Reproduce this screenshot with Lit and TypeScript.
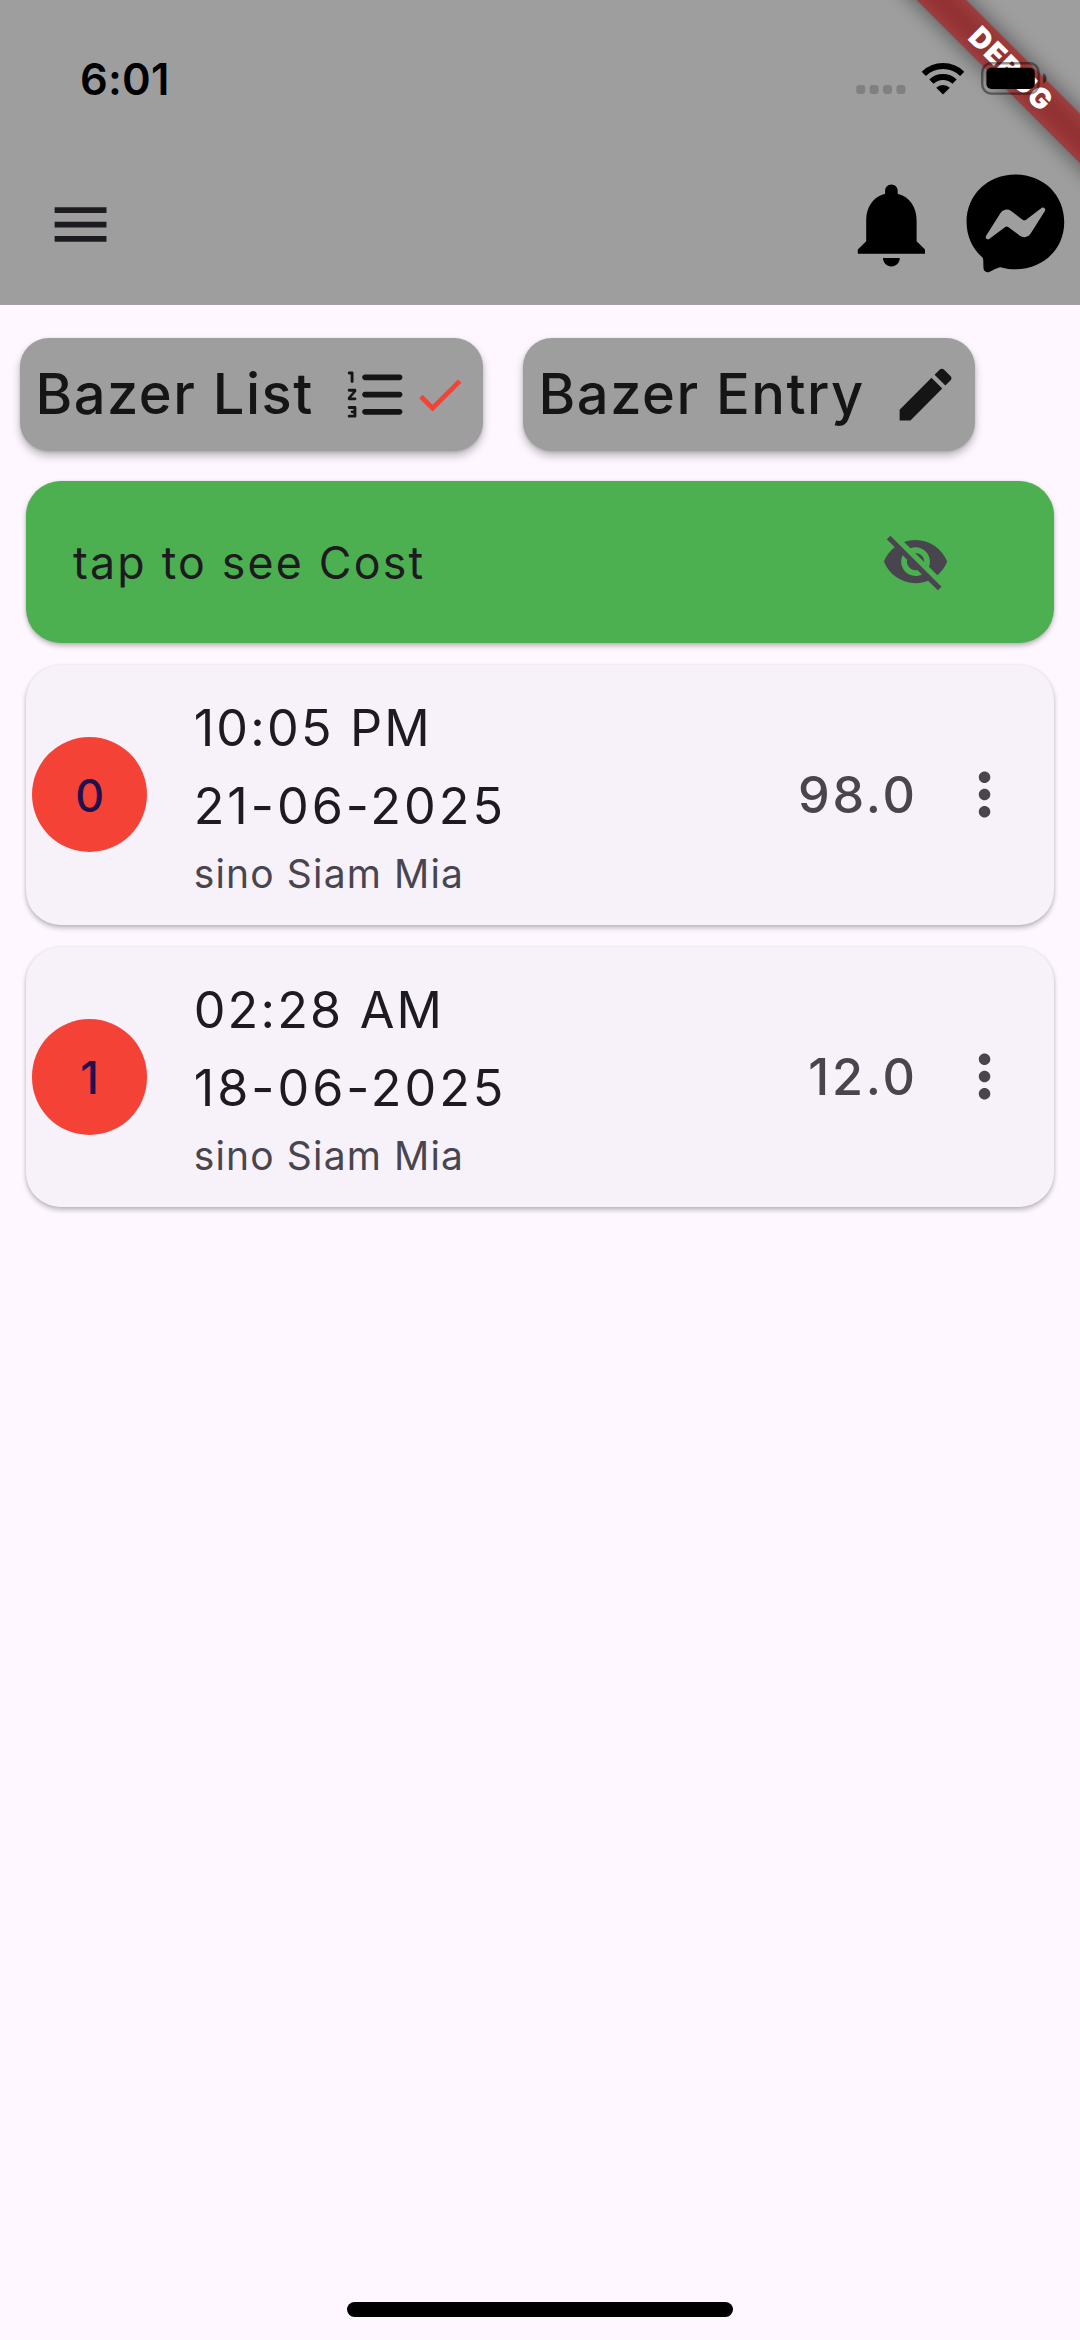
import { LitElement, html, css, svg } from "lit";
import { customElement, property } from "lit/decorators.js";

interface Expense {
  time: string;
  date: string;
  who: string;
  amount: string;
}

const EXPENSES: Expense[] = [
  { time: "10:05 PM", date: "21-06-2025", who: "sino Siam Mia", amount: "98.0" },
  { time: "02:28 AM", date: "18-06-2025", who: "sino Siam Mia", amount: "12.0" },
];

const ICONS = {
  menu: svg`<path d="M3 18h18v-2H3v2zm0-5h18v-2H3v2zm0-7v2h18V6H3z"/>`,
  bell: svg`<path d="M12 22c1.1 0 2-.9 2-2h-4c0 1.1.89 2 2 2zm6-6v-5c0-3.07-1.64-5.64-4.5-6.32V4c0-.83-.67-1.5-1.5-1.5s-1.5.67-1.5 1.5v.68C7.63 5.36 6 7.92 6 11v5l-2 2v1h16v-1l-2-2z"/>`,
  list: svg`<path d="M8 7h12c.55 0 1-.45 1-1s-.45-1-1-1H8c-.55 0-1 .45-1 1s.45 1 1 1zm12 10H8c-.55 0-1 .45-1 1s.45 1 1 1h12c.55 0 1-.45 1-1s-.45-1-1-1zm0-6H8c-.55 0-1 .45-1 1s.45 1 1 1h12c.55 0 1-.45 1-1s-.45-1-1-1zM4.5 16h-2c-.28 0-.5.22-.5.5s.22.5.5.5H4v.5h-.5c-.28 0-.5.22-.5.5s.22.5.5.5H4v.5H2.5c-.28 0-.5.22-.5.5s.22.5.5.5h2c.28 0 .5-.22.5-.5v-3c0-.28-.22-.5-.5-.5zm-2-11H3v2.5c0 .28.22.5.5.5s.5-.22.5-.5v-3c0-.28-.22-.5-.5-.5h-1c-.28 0-.5.22-.5.5s.22.5.5.5zm2 5h-2c-.28 0-.5.22-.5.5s.22.5.5.5h1.3l-1.68 1.96c-.08.09-.12.21-.12.32v.22c0 .28.22.5.5.5h2c.28 0 .5-.22.5-.5s-.22-.5-.5-.5H3.2l1.68-1.96c.08-.09.12-.21.12-.32v-.22c0-.28-.22-.5-.5-.5z"/>`,
  check: svg`<path d="M9 16.17L4.83 12l-1.42 1.41L9 19 21 7l-1.41-1.41z"/>`,
  edit: svg`<path d="M3 17.25V21h3.75L17.81 9.94l-3.75-3.75L3 17.25zM20.71 7.04c.39-.39.39-1.02 0-1.41l-2.34-2.34c-.39-.39-1.02-.39-1.41 0l-1.83 1.83 3.75 3.75 1.83-1.83z"/>`,
  eyeOff: svg`<path d="M12 7c2.76 0 5 2.24 5 5 0 .65-.13 1.26-.36 1.83l2.92 2.92c1.51-1.26 2.7-2.89 3.43-4.75-1.73-4.39-6-7.5-11-7.5-1.4 0-2.74.25-3.98.7l2.16 2.16C10.74 7.13 11.35 7 12 7zM2 4.27l2.28 2.28.46.46C3.08 8.3 1.78 10.02 1 12c1.73 4.39 6 7.5 11 7.5 1.55 0 3.03-.3 4.38-.84l.42.42L19.73 22 21 20.73 3.27 3 2 4.27zM7.53 9.8l1.55 1.55c-.05.21-.08.43-.08.65 0 1.66 1.34 3 3 3 .22 0 .44-.03.65-.08l1.55 1.55c-.67.33-1.41.53-2.2.53-2.76 0-5-2.24-5-5 0-.79.2-1.53.53-2.2zm4.31-.78l3.15 3.15.02-.16c0-1.66-1.34-3-3-3l-.17.01z"/>`,
  more: svg`<path d="M12 8c1.1 0 2-.9 2-2s-.9-2-2-2-2 .9-2 2 .9 2 2 2zm0 2c-1.1 0-2 .9-2 2s.9 2 2 2 2-.9 2-2-.9-2-2-2zm0 6c-1.1 0-2 .9-2 2s.9 2 2 2 2-.9 2-2-.9-2-2-2z"/>`,
};

type IconName = keyof typeof ICONS;

@customElement("md-icon")
class MdIcon extends LitElement {
  static styles = css`
    :host {
      display: block;
      flex: none;
      width: 69.12px;
      height: 69.12px;
    }
    .glyph {
      display: block;
      width: 100%;
      height: 100%;
      fill: currentColor;
    }
  `;
  @property() name: IconName = "menu";
  render() {
    return html`<svg class="glyph" viewBox="0 0 24 24">${ICONS[this.name]}</svg>`;
  }
}

@customElement("status-bar")
class StatusBar extends LitElement {
  static styles = css`
    :host {
      display: flex;
      align-items: center;
      box-sizing: border-box;
      height: 157.4px;
      padding: 0 33px 0 80px;
      color: #000;
    }
    .clock {
      flex: 1;
      font-size: 43.5px;
      line-height: 54px;
      font-weight: 600;
      letter-spacing: 0.2px;
    }
    .dots {
      display: block;
      width: 50px;
      height: 9px;
      margin: 22px 15px 0 0;
      fill: #808080;
    }
    .wifi {
      display: block;
      width: 44px;
      height: 33px;
      margin-right: 16px;
    }
    .battery {
      display: block;
      width: 66px;
      height: 33px;
    }
  `;
  render() {
    return html`
      <div class="clock">6:01</div>
      <svg class="dots" viewBox="0 0 50 9">
        <rect x="0.2" width="9" height="9" rx="3" />
        <rect x="13.6" width="9" height="9" rx="3" />
        <rect x="27" width="9" height="9" rx="3" />
        <rect x="40.4" width="9" height="9" rx="3" />
      </svg>
      <svg class="wifi" viewBox="0 0 44 33" fill="none" stroke="#000">
        <path d="M2.8 11.8a27.6 27.6 0 0 1 38.4 0" stroke-width="6" />
        <path d="M10.4 19.6a16.8 16.8 0 0 1 23.2 0" stroke-width="6" />
        <path d="M22 32.6l-6.8-6.9a9.9 9.9 0 0 1 13.6 0z" fill="#000" stroke="none" />
      </svg>
      <svg class="battery" viewBox="0 0 66 33">
        <rect x="1.2" y="1.2" width="56.4" height="30.4" rx="9" fill="none" stroke="#000" stroke-opacity="0.42" stroke-width="2.4" />
        <rect x="5.4" y="5.8" width="48.4" height="21.2" rx="5" fill="#000" />
        <path d="M62.2 11.3c4.4 2 4.4 8.4 0 10.4z" fill="#000" fill-opacity="0.55" />
      </svg>
    `;
  }
}

@customElement("app-toolbar")
class AppToolbar extends LitElement {
  static styles = css`
    :host {
      display: flex;
      align-items: center;
      box-sizing: border-box;
      height: 161.3px;
      padding: 0 14.4px 0 46.4px;
      color: #000;
    }
    .menu {
      color: #1d1b20;
      margin-right: auto;
    }
    .bell {
      width: 100.8px;
      height: 100.8px;
      margin-right: 23.4px;
    }
    .messenger {
      display: block;
      width: 100.8px;
      height: 100.8px;
      margin-bottom: 3px;
    }
  `;
  render() {
    return html`
      <md-icon class="menu" name="menu"></md-icon>
      <md-icon class="bell" name="bell"></md-icon>
      <svg class="messenger" viewBox="0 0 512 512">
        <path d="M256.55 8C116.52 8 8 110.34 8 248.57c0 72.3 29.71 134.78 78.07 177.94 8.35 7.51 6.63 11.86 8.05 58.23A19.92 19.92 0 0 0 122 502.31c52.91-23.3 53.59-25.14 62.56-22.7C337.85 521.8 504 423.7 504 248.57 504 110.34 396.59 8 256.55 8zm149.24 185.13l-73 115.57a37.37 37.37 0 0 1-53.91 9.93l-58.08-43.47a15 15 0 0 0-18 0l-78.37 59.44c-10.46 7.93-24.16-4.6-17.11-15.67l73-115.57a37.36 37.36 0 0 1 53.91-9.93l58.06 43.46a15 15 0 0 0 18 0l78.41-59.38c10.44-7.98 24.14 4.54 17.09 15.62z" />
      </svg>
    `;
  }
}

@customElement("debug-ribbon")
class DebugRibbon extends LitElement {
  static styles = css`
    :host {
      position: absolute;
      top: 0;
      right: 0;
      width: 240px;
      height: 240px;
      overflow: hidden;
      pointer-events: none;
    }
    .shadow,
    .band {
      position: absolute;
      left: 11px;
      top: 51.7px;
      width: 320px;
      height: 34.6px;
      transform: rotate(45deg);
    }
    .shadow {
      background: rgba(0, 0, 0, 0.5);
      filter: blur(11.4px);
    }
    .band {
      background: rgba(183, 28, 28, 0.627);
      color: #fff;
      font-size: 28.5px;
      line-height: 34.6px;
      font-weight: 900;
      letter-spacing: 1.3px;
      text-align: center;
    }
  `;
  render() {
    return html`
      <div class="shadow"></div>
      <div class="band">DEBUG</div>
    `;
  }
}

@customElement("expense-card")
class ExpenseCard extends LitElement {
  static styles = css`
    :host {
      display: flex;
      align-items: center;
      box-sizing: border-box;
      height: 260px;
      padding: 0 34.5px 0 6px;
      border-radius: 34.6px;
      background: #f7f1f9;
      box-shadow: 0 3px 5px rgba(0, 0, 0, 0.25), 0 0 3px rgba(0, 0, 0, 0.08);
    }
    .avatar {
      display: flex;
      align-items: center;
      justify-content: center;
      flex: none;
      box-sizing: border-box;
      width: 115.2px;
      height: 115.2px;
      padding-top: 3px;
      border-radius: 50%;
      background: #f44336;
      color: #210f4e;
      font-size: 44.7px;
      line-height: 60px;
      font-weight: 450;
    }
    .info {
      flex: 1;
      padding: 2px 0 0 46.5px;
    }
    .line {
      font-size: 50.3px;
      line-height: 77.7px;
      color: #1d1b20;
    }
    .time {
      letter-spacing: 2.2px;
    }
    .date {
      letter-spacing: 3px;
    }
    .who {
      font-size: 39px;
      line-height: 57.6px;
      letter-spacing: 1.15px;
      color: #49454f;
    }
    .amount {
      font-size: 50.3px;
      line-height: 72px;
      font-weight: 450;
      letter-spacing: 2.8px;
      color: #49454f;
    }
    .more {
      margin-left: 32.6px;
      color: #49454f;
    }
  `;
  @property({ type: Number }) index = 0;
  @property({ attribute: false }) item!: Expense;
  render() {
    const { time, date, who, amount } = this.item;
    return html`
      <div class="avatar">${this.index}</div>
      <div class="info">
        <div class="line time">${time}</div>
        <div class="line date">${date}</div>
        <div class="who">${who}</div>
      </div>
      <div class="amount">${amount}</div>
      <md-icon class="more" name="more"></md-icon>
    `;
  }
}

@customElement("app-root")
class AppRoot extends LitElement {
  static styles = css`
    :host {
      display: flex;
      flex-direction: column;
      position: relative;
      box-sizing: border-box;
      width: 1080px;
      height: 2340px;
      overflow: hidden;
      background: #fef7ff;
      font-family: Inter, "Liberation Sans", sans-serif;
    }
    .header {
      flex: none;
      height: 305.3px;
      background: #9e9e9e;
    }
    .status {
      position: relative;
      z-index: 2;
      margin-bottom: -13.4px;
    }
    .actions {
      display: flex;
      gap: 40.2px;
      padding: 33.1px 20px 0;
    }
    .action {
      display: flex;
      align-items: center;
      box-sizing: border-box;
      height: 112.3px;
      padding: 0 14.4px;
      border-radius: 28.8px;
      background: #9e9e9e;
      color: #151515;
      box-shadow: 0 5px 8px rgba(0, 0, 0, 0.26), 0 1px 3px rgba(0, 0, 0, 0.14);
    }
    .list {
      width: 463px;
    }
    .entry {
      width: 451.5px;
    }
    .label {
      flex: 1;
      white-space: nowrap;
      font-size: 56px;
      line-height: 72px;
      font-weight: 450;
      letter-spacing: 1.5px;
      padding: 0 0 1px 1px;
    }
    .check {
      width: 57.6px;
      height: 57.6px;
      color: #f44336;
    }
    .content {
      display: flex;
      flex-direction: column;
      flex: 1;
      gap: 22.2px;
      padding: 30.3px 26px 0;
    }
    .cost {
      display: flex;
      align-items: center;
      justify-content: space-between;
      flex: none;
      box-sizing: border-box;
      height: 161.6px;
      padding: 0 103.5px 0 47px;
      border-radius: 34.6px;
      background: #4caf50;
      box-shadow: 0 3px 5px rgba(0, 0, 0, 0.25), 0 0 3px rgba(0, 0, 0, 0.1);
      font-size: 44.7px;
      line-height: 64px;
      letter-spacing: 2.2px;
      color: #1d1b20;
    }
    .hint {
      padding-top: 2px;
    }
    .eye {
      color: #49454f;
    }
    .home {
      flex: none;
      align-self: center;
      width: 386.4px;
      height: 14.6px;
      margin-bottom: 23.2px;
      border-radius: 8px;
      background: #000;
    }
  `;
  render() {
    return html`
      <div class="header">
        <status-bar class="status"></status-bar>
        <app-toolbar></app-toolbar>
      </div>
      <debug-ribbon></debug-ribbon>
      <div class="actions">
        <div class="action list">
          <span class="label">Bazer List</span>
          <md-icon name="list"></md-icon>
          <md-icon class="check" name="check"></md-icon>
        </div>
        <div class="action entry">
          <span class="label">Bazer Entry</span>
          <md-icon name="edit"></md-icon>
        </div>
      </div>
      <div class="content">
        <div class="cost">
          <span class="hint">tap to see Cost</span>
          <md-icon class="eye" name="eyeOff"></md-icon>
        </div>
        ${EXPENSES.map((item, i) => html`<expense-card .index=${i} .item=${item}></expense-card>`)}
      </div>
      <div class="home"></div>
    `;
  }
}
